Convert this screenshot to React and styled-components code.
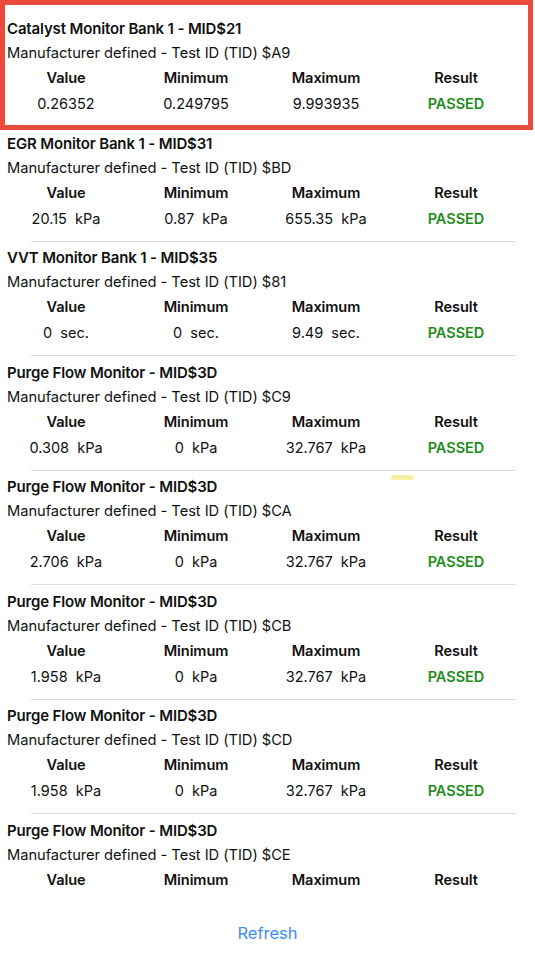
import styled, { createGlobalStyle } from "styled-components"

const tests = [
  { title: "Catalyst Monitor Bank 1 - MID$21", tid: "$A9", values: ["0.26352", "0.249795", "9.993935"], result: "PASSED" },
  { title: "EGR Monitor Bank 1 - MID$31", tid: "$BD", values: ["20.15  kPa", "0.87  kPa", "655.35  kPa"], result: "PASSED" },
  { title: "VVT Monitor Bank 1 - MID$35", tid: "$81", values: ["0  sec.", "0  sec.", "9.49  sec."], result: "PASSED" },
  { title: "Purge Flow Monitor - MID$3D", tid: "$C9", values: ["0.308  kPa", "0  kPa", "32.767  kPa"], result: "PASSED" },
  { title: "Purge Flow Monitor - MID$3D", tid: "$CA", values: ["2.706  kPa", "0  kPa", "32.767  kPa"], result: "PASSED" },
  { title: "Purge Flow Monitor - MID$3D", tid: "$CB", values: ["1.958  kPa", "0  kPa", "32.767  kPa"], result: "PASSED" },
  { title: "Purge Flow Monitor - MID$3D", tid: "$CD", values: ["1.958  kPa", "0  kPa", "32.767  kPa"], result: "PASSED" },
  { title: "Purge Flow Monitor - MID$3D", tid: "$CE", values: null },
]

function TestRow({ test, last }) {
  return (
    <Row $last={last}>
      <Title>{test.title}</Title>
      <Subtitle>Manufacturer defined - Test ID (TID) {test.tid}</Subtitle>
      <Grid>
        <Head>Value</Head>
        <Head>Minimum</Head>
        <Head>Maximum</Head>
        <Head>Result</Head>
      </Grid>
      {test.values && (
        <Grid>
          {test.values.map((v, i) => <Cell key={i}>{v}</Cell>)}
          <Cell $passed>{test.result}</Cell>
        </Grid>
      )}
    </Row>
  )
}

export default function App() {
  const [first, ...rest] = tests
  return (
    <Page>
      <GlobalStyle />
      <Highlight>
        <TestRow test={first} />
      </Highlight>
      {rest.map((t, i) => <TestRow key={i} test={t} last={i === rest.length - 1} />)}
      <Footer>
        <RefreshButton>Refresh</RefreshButton>
      </Footer>
      <Marker />
    </Page>
  )
}

const GlobalStyle = createGlobalStyle`
  body {
    margin: 0;
    background: #fff;
    font-family: Inter, "Liberation Sans", sans-serif;
    color: #111;
  }
`

const Page = styled.div`
  position: relative;
  width: 535px;
  height: 960px;
  overflow: hidden;
`

const Highlight = styled.div`
  position: relative;
  padding-top: 12.5px;

  &::after {
    content: "";
    position: absolute;
    top: 0;
    left: 0;
    right: 2px;
    height: 130px;
    box-sizing: border-box;
    border: 5px solid #e94b3c;
    pointer-events: none;
  }
`

const Row = styled.div`
  position: relative;
  padding: 3.5px 0 11px;

  &::after {
    content: "";
    display: ${p => (p.$last ? "none" : "block")};
    position: absolute;
    left: 31px;
    right: 19px;
    bottom: 0;
    height: 1px;
    background: #dcdcdc;
  }
`

const Title = styled.div`
  padding-left: 7px;
  font-size: 15px;
  font-weight: 600;
  line-height: 25px;
  letter-spacing: -0.15px;
`

const Subtitle = styled.div`
  padding-left: 7px;
  font-size: 14.7px;
  line-height: 25px;
  letter-spacing: -0.05px;
`

const Grid = styled.div`
  display: grid;
  grid-template-columns: repeat(4, 130px);
  margin-left: 1px;
`

const Head = styled.div`
  text-align: center;
  font-size: 14.6px;
  font-weight: 600;
  line-height: 25px;
  letter-spacing: -0.1px;
`

const Cell = styled.div`
  text-align: center;
  font-size: 14.5px;
  line-height: 25px;
  white-space: pre;
  font-weight: ${p => (p.$passed ? 600 : 400)};
  color: ${p => (p.$passed ? "#1f8c20" : "#111")};
`

const Footer = styled.div`
  display: flex;
  justify-content: center;
  padding-top: 17px;
`

const RefreshButton = styled.button`
  border: none;
  background: none;
  padding: 0;
  font-family: inherit;
  font-size: 16.5px;
  line-height: 24px;
  color: #3a8ef6;
`

const Marker = styled.div`
  position: absolute;
  left: 391px;
  top: 475px;
  width: 23px;
  height: 5px;
  border-radius: 3px;
  background: #f6ee8c;
  opacity: 0.8;
`
